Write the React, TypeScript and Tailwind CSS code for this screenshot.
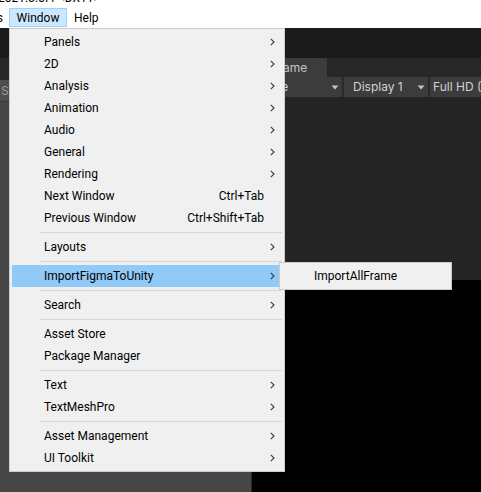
import React from "react";

const Chevron = () => (
  <svg width="5" height="8" viewBox="0 0 5 8" className="block">
    <polyline points="0.8,0.8 4,4 0.8,7.2" fill="none" stroke="#3a3a3a" strokeWidth="1.1" />
  </svg>
);

const Caret = () => (
  <svg width="8" height="5" viewBox="0 0 8 5" className="block">
    <polygon points="0.5,0.5 7.5,0.5 4,4.5" fill="#c4c4c4" />
  </svg>
);

type Entry =
  | { kind: "item"; label: string; shortcut?: string; sub?: boolean; active?: boolean }
  | { kind: "sep" };

const entries: Entry[] = [
  { kind: "item", label: "Panels", sub: true },
  { kind: "item", label: "2D", sub: true },
  { kind: "item", label: "Analysis", sub: true },
  { kind: "item", label: "Animation", sub: true },
  { kind: "item", label: "Audio", sub: true },
  { kind: "item", label: "General", sub: true },
  { kind: "item", label: "Rendering", sub: true },
  { kind: "item", label: "Next Window", shortcut: "Ctrl+Tab" },
  { kind: "item", label: "Previous Window", shortcut: "Ctrl+Shift+Tab" },
  { kind: "sep" },
  { kind: "item", label: "Layouts", sub: true },
  { kind: "sep" },
  { kind: "item", label: "ImportFigmaToUnity", sub: true, active: true },
  { kind: "sep" },
  { kind: "item", label: "Search", sub: true },
  { kind: "sep" },
  { kind: "item", label: "Asset Store" },
  { kind: "item", label: "Package Manager" },
  { kind: "sep" },
  { kind: "item", label: "Text", sub: true },
  { kind: "item", label: "TextMeshPro", sub: true },
  { kind: "sep" },
  { kind: "item", label: "Asset Management", sub: true },
  { kind: "item", label: "UI Toolkit", sub: true },
];

export default function App() {
  return (
    <div
      className="relative w-[481px] h-[492px] overflow-hidden bg-[#191919]"
      style={{ fontFamily: "Roboto, 'Noto Sans', sans-serif" }}
    >
      {/* title strip (cut off) */}
      <div className="h-[8px] bg-white overflow-hidden">
        <div className="-mt-[10px] -ml-[2px] text-[12px] leading-[16px] text-black whitespace-nowrap">
          2021.3.5f1 &lt;DX11&gt;
        </div>
      </div>

      {/* menu bar */}
      <div className="h-[20px] bg-white flex items-start text-[12px] text-black">
        <div className="w-[9px] h-[20px] overflow-hidden flex justify-end items-center pr-[6px] leading-none">
          <span className="whitespace-nowrap">Tools</span>
        </div>
        <div className="w-[58px] h-[19px] bg-[#cce8ff] border border-[#99d1ff] flex items-center justify-center leading-none">
          Window
        </div>
        <div className="ml-[7px] h-[19px] flex items-center leading-none">Help</div>
      </div>

      {/* main toolbar */}
      <div className="h-[30px] bg-[#1b1b1b]" />

      {/* panels */}
      <div
        className="flex h-[434px]"
        style={{ fontFamily: "Inter, 'Noto Sans', sans-serif" }}
      >
        {/* left panel */}
        <div className="w-[251px] shrink-0 flex flex-col bg-[#464646]">
          <div className="h-[22px] bg-[#282828]" />
          <div className="h-[22px] bg-[#4e4e4e] flex items-center text-[12px] text-[#9a9a9a] pl-[1px] border-b border-[#3a3a3a]">
            Slope
          </div>
          <div className="flex-1" />
        </div>
        <div className="w-[1px] shrink-0 bg-[#2a2a2a]" />
        {/* right panel */}
        <div className="flex-1 min-w-0 flex flex-col">
          <div className="h-[19px] shrink-0 bg-[#282828] flex items-end">
            <div className="ml-[17px] w-[58px] h-[19px] bg-[#3c3c3c] flex items-center pl-[5px] text-[12px] text-[#c4c4c4]">
              Game
            </div>
          </div>
          <div className="h-[21px] shrink-0 bg-[#3c3c3c] flex items-stretch text-[12px] text-[#d2d2d2] border-b border-[#262626]">
            <div className="w-[90px] shrink-0 flex items-center pl-[3px]">
              <span>Game</span>
              <span className="ml-auto mr-[3px]"><Caret /></span>
            </div>
            <div className="w-[2px] shrink-0 bg-[#2a2a2a]" />
            <div className="w-[84px] shrink-0 flex items-center pl-[9px]">
              <span className="whitespace-nowrap">Display 1</span>
              <span className="ml-auto mr-[3px]"><Caret /></span>
            </div>
            <div className="w-[2px] shrink-0 bg-[#2a2a2a]" />
            <div className="flex-1 min-w-0 flex items-center pl-[3px] whitespace-nowrap overflow-hidden">
              Full HD (1920x1080)
            </div>
          </div>
          <div className="h-[182px] shrink-0 bg-[#242424]" />
          <div className="flex-1 bg-black" />
        </div>
      </div>

      {/* Window dropdown menu */}
      <div className="absolute left-[9px] top-[28px] w-[276px] h-[444px] border border-[#cccccc] bg-[#f0f0f0] p-[2px] flex flex-col text-[12px] text-black">
        {entries.map((e, i) =>
          e.kind === "sep" ? (
            <div key={i} className="h-[7px] shrink-0 flex items-center pl-[28px]">
              <div className="h-px flex-1 bg-[#d7d7d7]" />
            </div>
          ) : (
            <div
              key={i}
              className={
                "h-[22px] flex items-center pl-[32px] shrink-0 " +
                (e.active ? "bg-[#91c9f7]" : "")
              }
            >
              <span className="flex-1 whitespace-nowrap">{e.label}</span>
              {e.shortcut ? <span className="whitespace-nowrap">{e.shortcut}</span> : null}
              <span className="w-[18px] pl-[6px] flex items-center">
                {e.sub ? <Chevron /> : null}
              </span>
            </div>
          )
        )}
      </div>

      {/* submenu */}
      <div className="absolute left-[279px] top-[262px] w-[173px] h-[28px] border border-[#cccccc] bg-[#f0f0f0] p-[2px] text-[12px] text-black">
        <div className="h-[22px] flex items-center pl-[32px] whitespace-nowrap">ImportAllFrame</div>
      </div>
    </div>
  );
}
